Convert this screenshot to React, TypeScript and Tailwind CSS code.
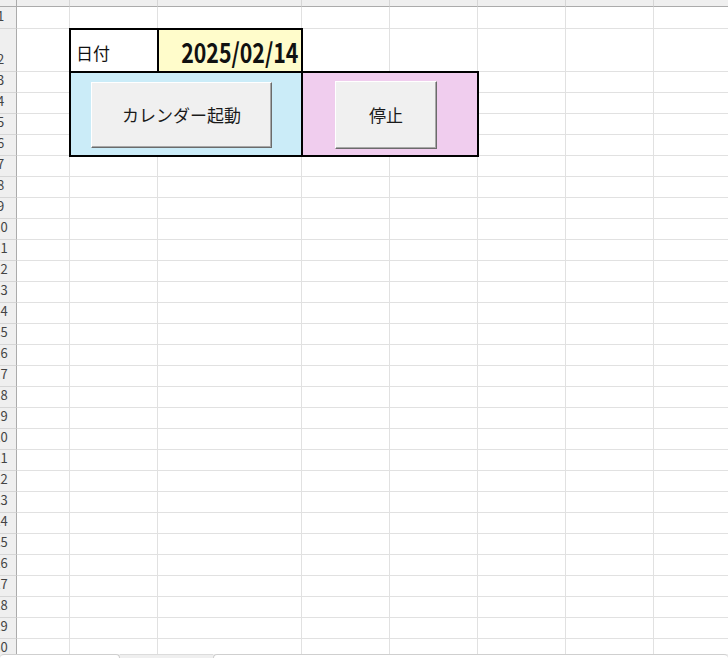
import React from "react";

// Spreadsheet view: column widths / row heights in px
const COLS = 9; // row header + A..H
const ROWS = 31; // column header + rows 1..30

const gridTemplate =
  "grid grid-cols-[17px_53px_88px_144px_88px_88px_88px_88px_88px] grid-rows-[7px_22px_43px_repeat(28,21px)]";

function Cell({ r, c }: { r: number; c: number }) {
  if (r === 0) {
    return (
      <div
        className={
          c === 0
            ? "bg-[#efefef] border-r border-b border-[#ababab]"
            : "bg-[#efefef] border-r border-[#d6d6d6] border-b border-b-[#ababab]"
        }
      />
    );
  }
  if (c === 0) {
    return (
      <div className="bg-[#efefef] border-r border-r-[#ababab] border-b border-b-[#d6d6d6] overflow-hidden flex items-end pb-[6px]">
        <span className="block w-[41px] -ml-[20px] shrink-0 text-center text-[13px] leading-none text-[#444]">
          {r}
        </span>
      </div>
    );
  }
  return <div className="bg-white border-r border-b border-[#e1e1e1]" />;
}

function SheetButton({ label, className }: { label: string; className: string }) {
  return (
    <button
      className={
        "flex items-center justify-center bg-[#f0f0f0] border border-t-white border-l-white border-r-[#6b6b6b] border-b-[#6b6b6b] shadow-[inset_-1px_-1px_0_#a8a8a8] text-[17px] text-[#1a1a1a] " +
        className
      }
    >
      {label}
    </button>
  );
}

export default function App() {
  const cells = [];
  for (let r = 0; r < ROWS; r++) {
    for (let c = 0; c < COLS; c++) {
      cells.push(<Cell key={`${r}-${c}`} r={r} c={c} />);
    }
  }

  return (
    <div
      className="w-[728px] h-[658px] overflow-hidden bg-white flex flex-col"
      style={{ fontFamily: '"Noto Sans CJK JP", "Noto Sans", sans-serif' }}
    >
      <div className="h-[654px] overflow-hidden grid">
        {/* background grid */}
        <div className={gridTemplate + " col-start-1 row-start-1"}>{cells}</div>

        {/* bordered block B2:E6 */}
        <div className={gridTemplate + " col-start-1 row-start-1"}>
          <div className="col-start-3 row-start-3 -m-px border-2 border-black bg-white flex items-end pl-[5px] pb-[10px] text-[17px] leading-none text-[#111]">
            日付
          </div>
          <div className="col-start-4 row-start-3 -m-px border-2 border-black bg-[#fffccb] flex items-end justify-end pr-[3px] pb-[6px] text-[27px] font-bold leading-none text-[#111]">
            <span className="inline-block scale-x-[0.79] origin-right">2025/02/14</span>
          </div>
          <div className="col-start-3 col-span-2 row-start-4 row-span-4 -m-px border-2 border-black bg-[#cbecf8] flex items-start pl-[20px] pt-[9px]">
            <SheetButton label="カレンダー起動" className="w-[181px] h-[66px]" />
          </div>
          <div className="col-start-5 col-span-2 row-start-4 row-span-4 -m-px border-2 border-black bg-[#f0cdee] flex items-start pl-[32px] pt-[8px]">
            <SheetButton label="停止" className="w-[102px] h-[68px]" />
          </div>
        </div>
      </div>

      {/* sheet tab / scroll strip */}
      <div className="h-[4px] bg-[#efefef] flex items-end">
        <div className="w-[120px] h-[4px] bg-white rounded-t-[4px] border-t border-r border-[#cfcfcf]" />
        <div className="w-[93px] h-[4px] border-t border-[#dcdcdc]" />
        <div className="flex-1 h-[4px] bg-white rounded-t-[4px] border-t border-l border-[#cfcfcf]" />
      </div>
    </div>
  );
}
